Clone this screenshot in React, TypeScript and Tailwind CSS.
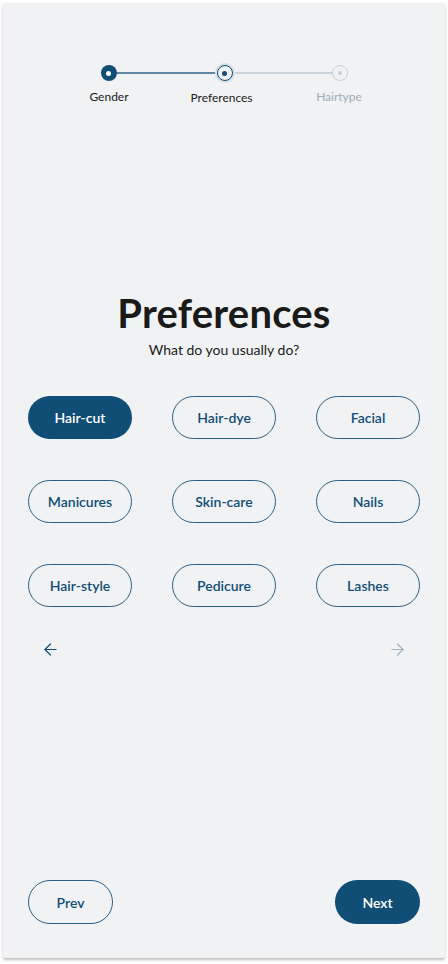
import { ArrowLeft, ArrowRight } from "lucide-react";

const options = [
  "Hair-cut",
  "Hair-dye",
  "Facial",
  "Manicures",
  "Skin-care",
  "Nails",
  "Hair-style",
  "Pedicure",
  "Lashes",
];

const Stepper = () => {
  return (
    <div className="pt-[60px]">
      <div className="flex items-center justify-center">
        <div className="w-4 h-4 rounded-full bg-[#114e75] flex items-center justify-center">
          <div className="w-[5px] h-[5px] rounded-full bg-white" />
        </div>
        <div className="w-[98px] h-[2px] bg-[#5d88a6]" />
        <div className="w-[20px] h-[20px] rounded-full bg-[#d8e0e7] flex items-center justify-center">
          <div className="w-4 h-4 rounded-full border border-[#114e75] bg-[#f0f2f4] flex items-center justify-center">
            <div className="w-[5px] h-[5px] rounded-full bg-[#114e75]" />
          </div>
        </div>
        <div className="w-[97px] h-[2px] bg-[#c9d4dd]" />
        <div className="w-4 h-4 rounded-full border border-[#c4d0da] bg-[#f0f2f4] flex items-center justify-center">
          <div className="w-[4px] h-[4px] rounded-full bg-[#c4d0da]" />
        </div>
      </div>
      <div className="flex justify-center mt-[6px] text-[12px] leading-4">
        <span className="w-[115px] text-center text-[#1b1b1b]">Gender</span>
        <span className="w-[115px] text-center text-[#1b1b1b] pr-[5px] pt-[1px]">Preferences</span>
        <span className="w-[115px] text-center text-[#9eabb7]">Hairtype</span>
      </div>
    </div>
  );
};

const App = () => {
  return (
    <div className="min-h-screen bg-white pt-[3px] px-[3px] font-['Lato',sans-serif]">
      <div className="h-[955px] bg-[#f0f2f4] rounded-[2px] shadow-[0_2px_3px_rgba(0,0,0,0.25)] flex flex-col">
        <Stepper />

        <div className="mt-[183px] flex flex-col items-center">
          <h1 className="text-[40px] leading-[48px] font-bold text-[#1a1a1a] tracking-[0.2px]">Preferences</h1>
          <p className="mt-[3px] text-[14px] leading-5 text-[#1a1a1a]">What do you usually do?</p>
        </div>

        <div className="mt-[36px] px-[25px] grid grid-cols-3 gap-x-10 gap-y-[41px]">
          {options.map((opt, i) => (
            <button
              key={opt}
              className={
                i === 0
                  ? "h-[43px] rounded-full bg-[#114e75] text-white text-[14px] font-semibold"
                  : "h-[43px] rounded-full border border-[#2b5f83] text-[#114e75] text-[14px] font-semibold"
              }
            >
              {opt}
            </button>
          ))}
        </div>

        <div className="mt-[33px] px-[38px] flex items-center justify-between">
          <ArrowLeft className="w-[19px] h-[19px] text-[#114e75]" strokeWidth={1.5} />
          <ArrowRight className="w-[19px] h-[19px] text-[#9fb3c3]" strokeWidth={1.5} />
        </div>

        <div className="mt-auto mb-[34px] px-[25px] flex items-center justify-between">
          <button className="w-[85px] h-[44px] rounded-full border border-[#2b5f83] text-[#114e75] text-[14px] font-semibold">
            Prev
          </button>
          <button className="w-[85px] h-[44px] rounded-full bg-[#114e75] text-white text-[14px] font-semibold">
            Next
          </button>
        </div>
      </div>
    </div>
  );
};

export default App;
